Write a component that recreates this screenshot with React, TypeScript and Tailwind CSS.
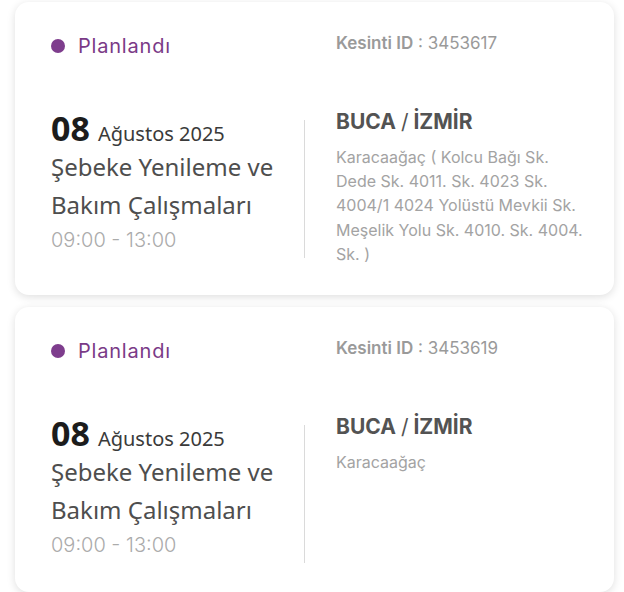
import type { ReactNode } from 'react';

interface Outage {
  id: string;
  day: string;
  monthYear: string;
  title: string;
  time: string;
  district: string;
  city: string;
  address: string;
}

const OUTAGES: Outage[] = [
  {
    id: '3453617',
    day: '08',
    monthYear: 'Ağustos 2025',
    title: 'Şebeke Yenileme ve Bakım Çalışmaları',
    time: '09:00 - 13:00',
    district: 'BUCA',
    city: 'İZMİR',
    address:
      'Karacaağaç ( Kolcu Bağı Sk. Dede Sk. 4011. Sk. 4023 Sk. 4004/1 4024 Yolüstü Mevkii Sk. Meşelik Yolu Sk. 4010. Sk. 4004. Sk. )',
  },
  {
    id: '3453619',
    day: '08',
    monthYear: 'Ağustos 2025',
    title: 'Şebeke Yenileme ve Bakım Çalışmaları',
    time: '09:00 - 13:00',
    district: 'BUCA',
    city: 'İZMİR',
    address: 'Karacaağaç',
  },
];

function Card({ children }: { children: ReactNode }) {
  return (
    <div className="ml-[15px] w-[599px] rounded-[14px] bg-white pl-[36px] pr-[27px] pt-[30px] pb-[29px] shadow-[0_2px_9px_rgba(0,0,0,0.13)]">
      {children}
    </div>
  );
}

function OutageCard({ item }: { item: Outage }) {
  return (
    <Card>
      <div className="grid grid-cols-[285px_1fr] items-center font-['Inter',sans-serif]">
        <div className="flex items-center gap-[13px]">
          <span className="h-[14px] w-[14px] rounded-full bg-[#7e3d8d]" />
          <span className="text-[20px] leading-[28px] tracking-[0.8px] text-[#7a3a87]">Planlandı</span>
        </div>
        <div className="-mt-[6px] text-[17px] leading-[24px] text-[#9a9a9a]">
          <span className="font-semibold">Kesinti ID</span> : {item.id}
        </div>
      </div>

      <div className="mt-[52px] grid grid-cols-[285px_1fr] items-start">
        <div className="mt-[8px] w-[254px] border-r border-[#dadada] pr-4 pb-[4px] font-['Noto_Sans',sans-serif]">
          <div className="-mt-[12px] flex items-baseline gap-[8px]">
            <span className="text-[34px] font-bold leading-[40px] text-[#1c1c1c]">{item.day}</span>
            <span className="text-[20px] leading-[28px] text-[#3a3a3a]">{item.monthYear}</span>
          </div>
          <div className="text-[24px] leading-[38px] text-[#4e4e4e]">{item.title}</div>
          <div className="mt-[2px] font-['Inter',sans-serif] text-[20px] leading-[28px] font-light text-[#ababab]">{item.time}</div>
        </div>
        <div className="font-['Inter',sans-serif]">
          <div className="-mt-[4px] text-[21px] leading-[28px] font-bold text-[#535353]">
            {item.district} <span className="font-normal">/</span> {item.city}
          </div>
          <p className="mt-[9px] text-[16px] leading-[24.2px] text-[#a3a3a3]">{item.address}</p>
        </div>
      </div>
    </Card>
  );
}

export default function App() {
  return (
    <div className="min-h-screen bg-white pt-[2px]">
      <div className="flex flex-col gap-[12px]">
        {OUTAGES.map((o) => (
          <OutageCard key={o.id} item={o} />
        ))}
      </div>
    </div>
  );
}
